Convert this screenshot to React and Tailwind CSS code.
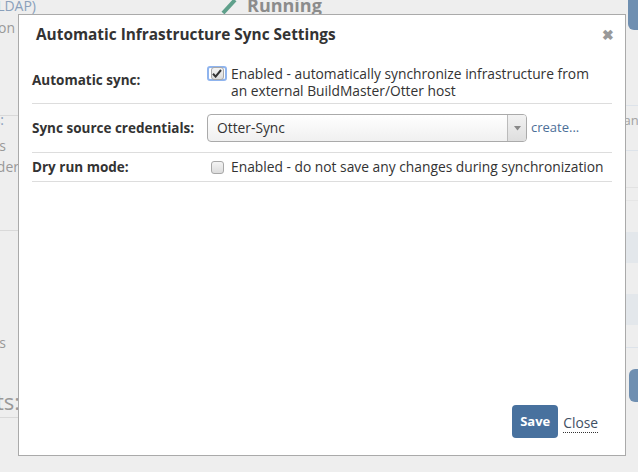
import React from 'react';

function Pencil() {
  return (
    <svg width="18" height="16" viewBox="0 0 18 16" className="ml-[10px] mt-[-2px]">
      <line x1="3" y1="15" x2="15" y2="2" stroke="#5fa08b" strokeWidth="4" strokeLinecap="butt" />
    </svg>
  );
}

function CheckBox({ checked, focused }) {
  const box = (
    <span className="flex w-[13px] h-[13px] items-center justify-center rounded-[3px] border border-[#a8a8a8] bg-gradient-to-b from-[#f4f4f4] to-[#dcdcdc]">
      {checked && (
        <svg width="10" height="9" viewBox="0 0 10 9">
          <path d="M1 4.8 L3.6 7.6 L9 1" fill="none" stroke="#333" strokeWidth="2" />
        </svg>
      )}
    </span>
  );
  if (!focused) return <span className="flex w-[20px] justify-center">{box}</span>;
  return (
    <span className="flex w-[20px] h-[15px] items-center justify-center rounded-[3px] border-2 border-[#8fb4ee]">
      {box}
    </span>
  );
}

export default function App() {
  return (
    <div className="relative w-[638px] h-[472px] overflow-hidden bg-[#eeeeee] text-[13.8px] text-[#333]" style={{ fontFamily: '"Open Sans", Lato, sans-serif' }}>
      {/* page behind the dialog */}
      <div className="flex h-full">
        <div className="w-[210px] flex flex-col">
          <div className="flex justify-end w-[36px] overflow-hidden whitespace-nowrap text-[14px] leading-[16px] text-[#8aa0bb] mt-[-2px]">Active Directory (LDAP)</div>
          <div className="flex justify-end w-[15px] overflow-hidden whitespace-nowrap text-[14px] leading-[16px] text-[#999] mt-[6px]">Integration</div>
          <div className="h-px w-full bg-[#d9d9d9] mt-[79px]" />
          <div className="flex justify-end w-[4px] overflow-hidden whitespace-nowrap text-[14px] leading-[16px] text-[#8aa0bb] mt-[-4px]">Users:</div>
          <div className="flex justify-end w-[6px] overflow-hidden whitespace-nowrap text-[14px] leading-[16px] text-[#999] mt-[10px]">Groups</div>
          <div className="flex justify-end w-[19px] overflow-hidden whitespace-nowrap text-[14px] leading-[16px] text-[#999] mt-[5px]">Provider</div>
          <div className="h-px w-full bg-[#d9d9d9] mt-[55px]" />
          <div className="flex justify-end w-[6px] overflow-hidden whitespace-nowrap text-[14px] leading-[16px] text-[#999] mt-[104px]">Roles</div>
          <div className="flex justify-end w-[20px] overflow-hidden whitespace-nowrap text-[22px] leading-[24px] text-[#999] mt-[38px]">Agents:</div>
          <div className="h-px w-full bg-[#d9d9d9] mt-[4px]" />
        </div>
        <div className="flex-1 flex items-start">
          <Pencil />
          <span className="ml-[9px] mt-[-6px] text-[18px] leading-[22px] font-bold text-[#8c8c8c]">Running</span>
        </div>
        <div className="w-[190px] flex flex-col">
          <div className="flex justify-end">
            <div className="w-[40px] h-[30px] rounded-b-[6px] rounded-t-none bg-[#6f8fb1] mr-[-30px]" />
          </div>
          <div className="h-px bg-[#dde3ea] mt-[75px]" />
          <div className="flex justify-end w-[202px] overflow-hidden whitespace-nowrap text-[13px] leading-[16px] text-[#a2a2a2] mt-[6px]">Manul</div>
          <div className="h-px bg-[#dde3ea] mt-[22px]" />
          <div className="h-px bg-[#e2e2e2] mt-[36px]" />
          <div className="h-px bg-[#e6e6e6] mt-[12px]" />
          <div className="h-[31px] bg-[#e3e7eb] mt-[31px]" />
          <div className="h-[31px] bg-[#e3e7eb] mt-[31px]" />
          <div className="h-px bg-[#dde3ea] mt-[22px]" />
          <div className="flex justify-end">
            <div className="w-[40px] h-[33px] rounded-[6px] bg-[#6f8fb1] mt-[21px] mr-[-31px]" />
          </div>
        </div>
      </div>

      {/* dialog */}
      <div className="absolute left-[18px] top-[14px] w-[608px] h-[442px] bg-white border border-[#aaaaaa] flex flex-col">
        <div className="flex items-center justify-between pl-[17px] pr-[11px] pt-[2px] h-[38px]">
          <span className="text-[15.4px] font-bold text-[#333]">Automatic Infrastructure Sync Settings</span>
          <span className="text-[14px] font-bold text-[#999] leading-none">✖</span>
        </div>
        <div className="flex flex-col px-[13px] mt-[5px]">
          <div className="flex items-center h-[46px] border-b border-[#dddddd]">
            <div className="w-[175px] font-bold text-[13.5px]">Automatic sync:</div>
            <div className="flex items-start flex-1 pt-[2px]">
              <span className="mt-[1px]"><CheckBox checked focused /></span>
              <span className="ml-[4px] leading-[17px]">Enabled - automatically synchronize infrastructure from<br />an external BuildMaster/Otter host</span>
            </div>
          </div>
          <div className="flex items-center h-[49px] border-b border-[#dddddd]">
            <div className="w-[175px] font-bold text-[13.5px]">Sync source credentials:</div>
            <div className="flex items-center w-[320px] h-[28px] rounded-[4px] border border-[#aaaaaa] bg-gradient-to-b from-white to-[#f0f0f0]">
              <span className="flex-1 pl-[9px]">Otter-Sync</span>
              <span className="flex w-[19px] h-full items-center justify-center border-l border-[#bbbbbb] bg-gradient-to-b from-[#f2f2f2] to-[#dedede] rounded-r-[3px]">
                <svg width="7" height="5" viewBox="0 0 7 5"><path d="M0 0 H7 L3.5 4.5 Z" fill="#888" /></svg>
              </span>
            </div>
            <span className="ml-[4px] text-[13px] text-[#4c6f98]">create...</span>
          </div>
          <div className="flex items-center h-[29px] border-b border-[#dddddd]">
            <div className="w-[175px] font-bold text-[13.5px]">Dry run mode:</div>
            <CheckBox />
            <span className="ml-[4px]">Enabled - do not save any changes during synchronization</span>
          </div>
        </div>
        <div className="flex-1" />
        <div className="flex items-center justify-end pr-[27px] pb-[17px]">
          <button className="h-[33px] w-[46px] rounded-[4px] bg-[#48719e] text-white font-bold text-[13px]">Save</button>
          <span className="ml-[5px] text-[#3f4f63] border-b border-dotted border-[#333] leading-[18px] mt-[4px]">Close</span>
        </div>
      </div>
    </div>
  );
}
